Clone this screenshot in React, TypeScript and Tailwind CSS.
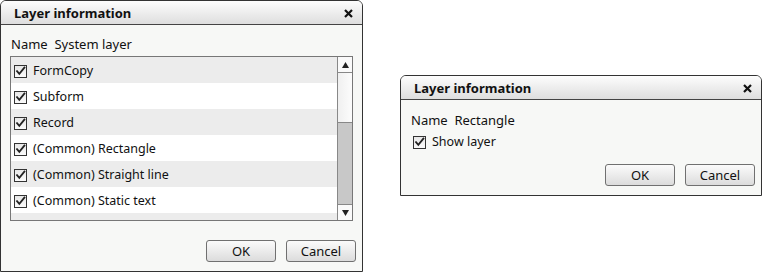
import React from 'react';

const font = { fontFamily: '"Noto Sans", "Open Sans", Arial, sans-serif' };

const Check: React.FC = () => {
  return <span className="inline-flex h-[13px] w-[13px] shrink-0 items-center justify-center border border-[#333] bg-gradient-to-b from-[#e8e8e8] to-[#fafafa]">
      <svg width="11" height="11" viewBox="0 0 11 11">
        <path d="M2 5.2 L4.3 7.8 L9.4 1.6" fill="none" stroke="#222" strokeWidth="1.8" strokeLinecap="square" />
      </svg>
    </span>;
};

const Btn: React.FC<{ label: string }> = ({ label }) => {
  return <button className="h-[22px] w-[70px] rounded-[3px] border border-[#707070] bg-gradient-to-b from-[#fbfbfb] to-[#dcdcdc] text-[13px] leading-none text-[#111]">
      {label}
    </button>;
};

const TitleBar: React.FC = () => {
  return <div className="flex h-[24px] items-center justify-between rounded-t-[5px] border-b border-[#444] bg-gradient-to-b from-[#fdfdfd] to-[#dedede] pl-[13px] pr-[9px] pt-[3px]">
      <span className="text-[13px] font-bold text-[#111]">Layer information</span>
      <svg width="9" height="9" viewBox="0 0 9 9" className="mb-[2px]">
        <path d="M1 1 L8 8 M8 1 L1 8" stroke="#111" strokeWidth="2.2" />
      </svg>
    </div>;
};

const items = ['FormCopy', 'Subform', 'Record', '(Common) Rectangle', '(Common) Straight line', '(Common) Static text', ''];

const App: React.FC = () => {
  return <div className="flex h-[272px] w-[762px] items-start bg-white text-[13px] text-[#111]" style={font}>
      <div className="flex h-[272px] w-[363px] flex-col rounded-t-[6px] border border-[#333] bg-[#f7f8f6]">
        <TitleBar />
        <div className="px-[10px] pt-[13px] leading-none">Name&nbsp; System layer</div>
        <div className="mx-[9px] mt-[5px] flex h-[165px] overflow-hidden border border-[#777] bg-white">
          <div className="flex-1 overflow-hidden">
            {items.map((t, i) => <div key={i} className={`flex h-[26px] items-center gap-[6px] pl-[3px] pt-[3px] ${i % 2 === 0 ? 'bg-[#ececec]' : 'bg-white'}`}>
                <Check />
                <span className="text-[12.5px]">{t}</span>
              </div>)}
          </div>
          <div className="flex w-[15px] flex-col border-l border-[#888] bg-[#fafafa]">
            <div className="flex h-[16px] items-center justify-center border-b border-[#888]">
              <svg width="7" height="6" viewBox="0 0 7 6"><path d="M3.5 0 L7 6 L0 6 Z" fill="#222" /></svg>
            </div>
            <div className="h-[49px] bg-gradient-to-r from-[#f0f0f0] to-[#fcfcfc]" />
            <div className="flex-1 border-y border-[#888] bg-[#c8c8c8]" />
            <div className="flex h-[15px] items-center justify-center">
              <svg width="7" height="6" viewBox="0 0 7 6"><path d="M0 0 L7 0 L3.5 6 Z" fill="#222" /></svg>
            </div>
          </div>
        </div>
        <div className="mt-[19px] flex justify-end gap-[10px] pr-[6px]">
          <Btn label="OK" />
          <Btn label="Cancel" />
        </div>
      </div>
      <div className="ml-[37px] mt-[75px] flex h-[121px] w-[362px] flex-col rounded-t-[6px] border border-[#333] bg-[#f7f8f6]">
        <TitleBar />
        <div className="px-[10px] pt-[14px] leading-none">Name&nbsp; Rectangle</div>
        <div className="mt-[9px] flex items-center gap-[6px] pl-[12px]">
          <Check />
          <span className="text-[12.5px] leading-none">Show layer</span>
        </div>
        <div className="mt-[15px] flex justify-end gap-[10px] pr-[6px]">
          <Btn label="OK" />
          <Btn label="Cancel" />
        </div>
      </div>
    </div>;
};

export default App;
